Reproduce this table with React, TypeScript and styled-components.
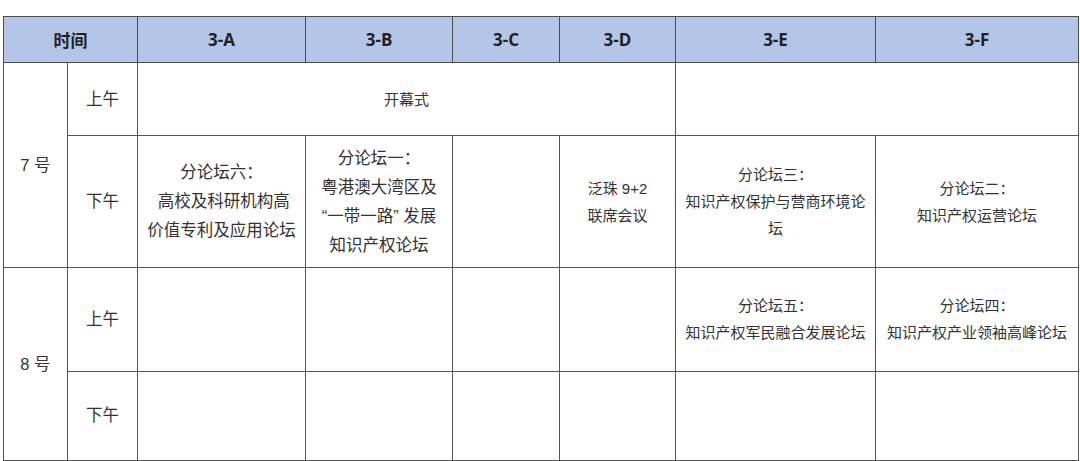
import React from "react";
import styled, { createGlobalStyle } from "styled-components";

const GlobalStyle = createGlobalStyle`
  html, body {
    margin: 0;
    padding: 0;
    background: #ffffff;
  }
  body {
    font-family: "Liberation Sans", "Noto Sans CJK SC", sans-serif;
  }
`;

const Page = styled.div`
  display: flex;
  padding: 16px 0 0 3px;
  width: 1080px;
  height: 461px;
  box-sizing: border-box;
  overflow: hidden;
`;

const Schedule = styled.table`
  border-collapse: collapse;
  table-layout: fixed;
  width: 1075px;
  color: #333333;
`;

const HeadRow = styled.tr`
  height: 46px;
  background: #b4c6e7;
`;

const Row = styled.tr<{ $height: number }>`
  height: ${(p) => p.$height}px;
`;

const HeadCell = styled.th`
  border: 1px solid #4d4d4d;
  padding: 0;
  font-family: "Open Sans", "Noto Sans CJK SC", sans-serif;
  font-weight: 700;
  font-size: 17px;
  color: #222222;
  text-align: center;
  vertical-align: middle;
`;

const Cell = styled.td<{ $size?: number }>`
  border: 1px solid #555555;
  padding: 0;
  font-family: "Liberation Sans", "Noto Sans CJK SC", sans-serif;
  font-size: ${(p) => p.$size ?? 15}px;
  line-height: ${(p) => ((p.$size ?? 15) > 15 ? 29 : 27)}px;
  text-align: center;
  vertical-align: middle;
  white-space: nowrap;
`;

const columns = [64, 70, 168, 147, 107, 116, 200, 203];
const halls = ["3-A", "3-B", "3-C", "3-D", "3-E", "3-F"];

const Lines: React.FC<{ text: string[] }> = ({ text }) => (
  <>
    {text.map((line, i) => (
      <React.Fragment key={i}>
        {i > 0 && <br />}
        {line}
      </React.Fragment>
    ))}
  </>
);

export default function App() {
  return (
    <>
      <GlobalStyle />
      <Page>
        <Schedule>
          <colgroup>
            {columns.map((w, i) => (
              <col key={i} style={{ width: w }} />
            ))}
          </colgroup>
          <thead>
            <HeadRow>
              <HeadCell colSpan={2}>时间</HeadCell>
              {halls.map((h) => (
                <HeadCell key={h}>{h}</HeadCell>
              ))}
            </HeadRow>
          </thead>
          <tbody>
            <Row $height={73}>
              <Cell rowSpan={2} $size={16.5}>7 号</Cell>
              <Cell $size={16.5}>上午</Cell>
              <Cell colSpan={4}>开幕式</Cell>
              <Cell colSpan={2} />
            </Row>
            <Row $height={131}>
              <Cell $size={16.5}>下午</Cell>
              <Cell $size={16.5}>
                <Lines text={["分论坛六：", "\u00a0高校及科研机构高", "价值专利及应用论坛"]} />
              </Cell>
              <Cell $size={16.5}>
                <Lines text={["分论坛一：", "粤港澳大湾区及", "“一带一路” 发展", "知识产权论坛"]} />
              </Cell>
              <Cell />
              <Cell>
                <Lines text={["泛珠 9+2", "联席会议"]} />
              </Cell>
              <Cell>
                <Lines text={["分论坛三：", "知识产权保护与营商环境论", "坛"]} />
              </Cell>
              <Cell>
                <Lines text={["分论坛二：", "知识产权运营论坛"]} />
              </Cell>
            </Row>
            <Row $height={103}>
              <Cell rowSpan={2} $size={16.5}>8 号</Cell>
              <Cell $size={16.5}>上午</Cell>
              <Cell />
              <Cell />
              <Cell />
              <Cell />
              <Cell>
                <Lines text={["分论坛五：", "知识产权军民融合发展论坛"]} />
              </Cell>
              <Cell>
                <Lines text={["分论坛四：", "知识产权产业领袖高峰论坛"]} />
              </Cell>
            </Row>
            <Row $height={89}>
              <Cell $size={16.5}>下午</Cell>
              <Cell />
              <Cell />
              <Cell />
              <Cell />
              <Cell />
              <Cell />
            </Row>
          </tbody>
        </Schedule>
      </Page>
    </>
  );
}
